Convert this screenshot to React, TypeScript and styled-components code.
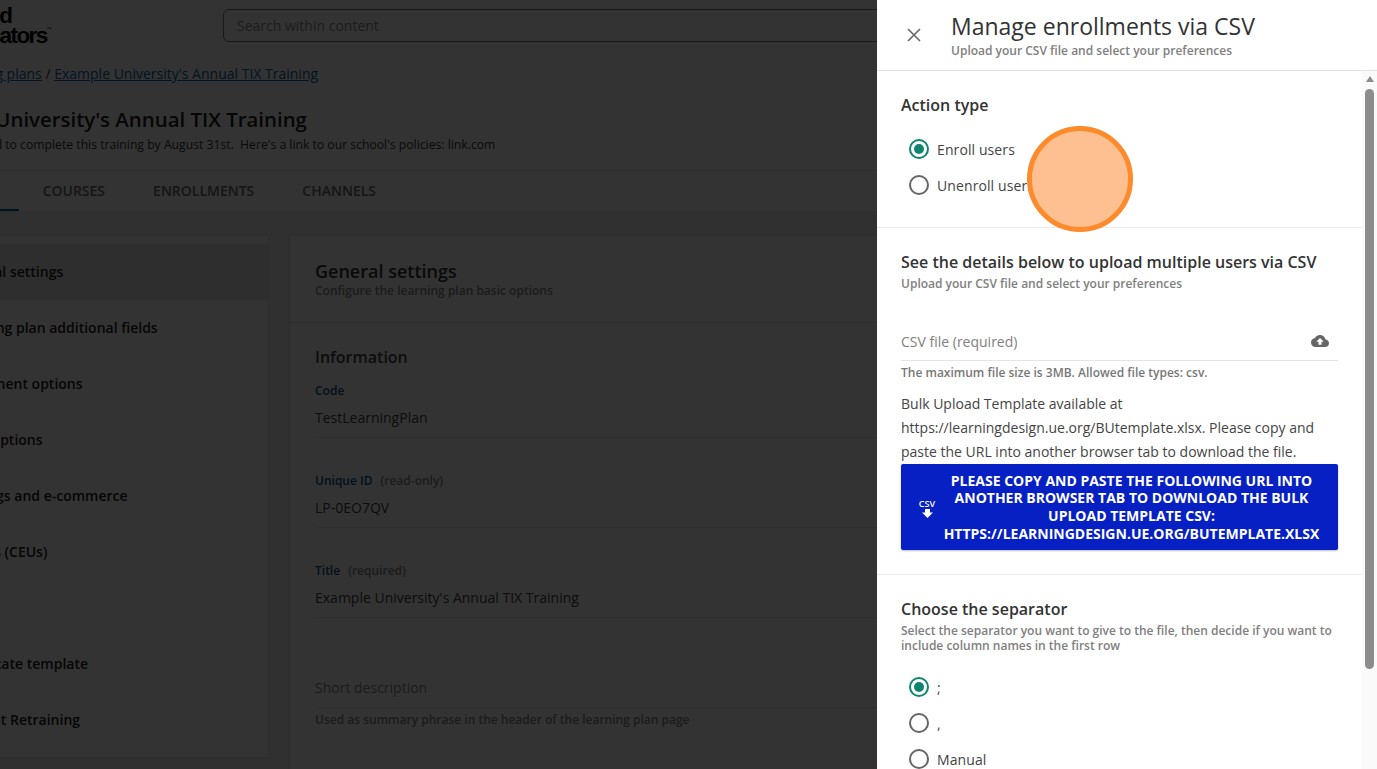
import styled, { createGlobalStyle } from 'styled-components';

const GlobalStyle = createGlobalStyle`
  html, body {
    margin: 0;
    height: 100%;
    overflow: hidden;
    background: #fff;
    font-family: "Open Sans", "Liberation Sans", sans-serif;
    color: #333;
  }
  * { box-sizing: border-box; }
`;

/* page behind the overlay, scrolled sideways so that its left edge is cut */
const Page = styled.div`
  width: 1497px;
  height: 769px;
  margin-left: -120px;
  overflow: hidden;
  display: flex;
  flex-direction: column;
  background: #fff;
  & > * { flex: none; }
`;

const TopBar = styled.header`
  height: 52px;
  display: flex;
  align-items: flex-start;
  padding-left: 71px;
`;

const Logo = styled.div`
  width: 272px;
  padding-top: 6px;
  font-family: "Liberation Sans", sans-serif;
  font-weight: 700;
  font-size: 22.5px;
  line-height: 20px;
  letter-spacing: -1.6px;
  color: #000;
  sup {
    font-size: 5px;
    line-height: 0;
    vertical-align: 12px;
    letter-spacing: 0;
  }
`;

const Search = styled.div`
  flex: 1;
  height: 33px;
  margin-top: 9px;
  padding: 0 13px;
  display: flex;
  align-items: center;
  border: 1px solid #7d7d7d;
  border-radius: 6px;
  font-size: 14px;
  color: #8e8e8e;
`;

const Crumbs = styled.div`
  padding: 13px 0 0 66px;
  height: 54px;
  font-size: 14px;
  line-height: 18px;
  a {
    color: #0465ac;
    text-decoration: underline;
  }
`;

const PageTitle = styled.h1`
  margin: 0;
  padding-left: 26px;
  font-size: 20.4px;
  font-weight: 600;
  line-height: 27px;
  height: 31px;
  color: #222;
`;

const PageDesc = styled.p`
  margin: 0;
  padding-left: 58px;
  height: 33px;
  font-size: 12.2px;
  line-height: 16px;
`;

const Tabs = styled.nav`
  display: flex;
  height: 42px;
  padding-left: 9px;
  border-top: 1px solid #e4e4e4;
  border-bottom: 1px solid #e4e4e4;
`;

const Tab = styled.div<{ $active?: boolean }>`
  padding: 0 24px;
  height: 40px;
  display: flex;
  align-items: center;
  font-size: 14px;
  font-weight: 600;
  color: ${(p) => (p.$active ? '#0465ac' : '#6a6a6a')};
  border-bottom: 2px solid ${(p) => (p.$active ? '#0465ac' : 'transparent')};
`;

const Body = styled.div`
  flex: 1 !important;
  display: flex;
  align-items: flex-start;
  gap: 22px;
  padding: 24px 0 0 46px;
  background: #f0f0f0;
`;

const SideMenu = styled.aside`
  width: 342px;
  padding-top: 8px;
  height: 521px;
  flex: none;
  background: #fff;
  box-shadow: 0 0 2px rgba(0, 0, 0, 0.2);
`;

const SideItem = styled.div<{ $active?: boolean }>`
  height: 56px;
  padding: 0 0 2px 27px;
  display: flex;
  align-items: center;
  font-size: 14px;
  font-weight: 600;
  color: #222;
  background: ${(p) => (p.$active ? '#e6e6e6' : 'transparent')};
`;

const Card = styled.main`
  flex: 1;
  height: 540px;
  background: #fff;
  box-shadow: 0 0 2px rgba(0, 0, 0, 0.2);
`;

const CardHead = styled.div`
  height: 87px;
  padding: 24px 25px 0;
  border-bottom: 1px solid #e4e4e4;
  h2 {
    margin: 0;
    font-size: 18px;
    font-weight: 600;
    line-height: 23px;
  }
  p {
    margin: 0;
    font-size: 12px;
    font-weight: 600;
    line-height: 16px;
    color: #8a8a8a;
  }
`;

const CardBody = styled.div`
  padding: 22px 25px 0;
  h3 {
    margin: 0 0 14px;
    font-size: 16px;
    font-weight: 600;
    line-height: 24px;
    color: #444;
  }
`;

const Field = styled.div`
  height: 90px;
  label {
    display: block;
    height: 16px;
    font-size: 12px;
    font-weight: 600;
    line-height: 16px;
    color: #0b4f8a;
    span {
      margin-left: 8px;
      color: #8a8a8a;
    }
  }
`;

const FieldValue = styled.div<{ $muted?: boolean }>`
  height: 39px;
  padding-top: 9px;
  font-size: 14px;
  line-height: 20px;
  border-bottom: 1px solid #e4e4e4;
  color: ${(p) => (p.$muted ? '#8a8a8a' : '#444')};
`;

const FieldHelp = styled.div`
  padding-top: 4px;
  font-size: 12px;
  font-weight: 600;
  line-height: 16px;
  color: #8a8a8a;
`;

const Overlay = styled.div`
  position: fixed;
  inset: 0;
  background: rgba(0, 0, 0, 0.8);
`;

const Drawer = styled.aside`
  position: fixed;
  top: 0;
  right: 0;
  bottom: 0;
  width: 500px;
  display: flex;
  flex-direction: column;
  background: #fff;
`;

const DrawerHead = styled.header`
  height: 71px;
  flex: none;
  display: flex;
  padding-left: 30px;
  border-bottom: 1px solid #e3e3e3;
`;

const CloseButton = styled.button`
  width: 14px;
  height: 14px;
  margin-top: 28px;
  padding: 0;
  border: 0;
  background: none;
  color: #666;
  svg { display: block; }
`;

const HeadText = styled.div`
  margin-left: 30px;
  padding-top: 10px;
  h1 {
    margin: 0;
    font-size: 23px;
    font-weight: 400;
    line-height: 33px;
    color: #333;
  }
  p {
    margin: 0;
    font-size: 12px;
    font-weight: 600;
    line-height: 15px;
    color: #808080;
  }
`;

const DrawerMain = styled.div`
  flex: 1;
  min-height: 0;
  display: flex;
`;

const Scroller = styled.div`
  flex: 1;
  min-width: 0;
  overflow: hidden;
`;

const Section = styled.section<{ $height: number }>`
  height: ${(p) => p.$height}px;
  padding: 23px 24px 0;
  border-bottom: 1px solid #e8e8e8;
`;

const SectionTitle = styled.h2`
  margin: 0 0 3px;
  font-size: 16px;
  font-weight: 600;
  line-height: 22px;
  color: #333;
`;

const SectionSub = styled.p`
  margin: 0;
  font-size: 12px;
  font-weight: 600;
  line-height: 15px;
  color: #808080;
`;

const RadioList = styled.div<{ $top: number }>`
  margin-top: ${(p) => p.$top}px;
  display: flex;
  flex-direction: column;
  gap: 16px;
`;

const RadioRow = styled.div`
  display: flex;
  align-items: center;
  height: 20px;
  padding-left: 8px;
  gap: 8px;
  font-size: 14px;
  letter-spacing: 0.1px;
  color: #444;
`;

const RadioDot = styled.span<{ $on?: boolean }>`
  width: 20px;
  height: 20px;
  flex: none;
  border-radius: 50%;
  border: 2px solid ${(p) => (p.$on ? '#0e8570' : '#666')};
  display: flex;
  align-items: center;
  justify-content: center;
  &::after {
    content: '';
    width: 10px;
    height: 10px;
    border-radius: 50%;
    background: ${(p) => (p.$on ? '#0e8570' : 'transparent')};
  }
`;

const FileRow = styled.div`
  margin-top: 31px;
  height: 39px;
  width: 437px;
  display: flex;
  align-items: center;
  justify-content: space-between;
  padding-right: 9px;
  border-bottom: 1px solid #e4e4e4;
  font-size: 14px;
  color: #808080;
  svg { display: block; color: #666; }
`;

const FileHelp = styled.div`
  margin-top: 4px;
  font-size: 12px;
  font-weight: 600;
  line-height: 15px;
  color: #777;
`;

const Paragraph = styled.p`
  margin: 12px 0 0;
  width: 437px;
  font-size: 14px;
  line-height: 24px;
  color: #444;
`;

const DownloadBtn = styled.button`
  width: 437px;
  height: 86px;
  padding: 0 16px;
  display: flex;
  align-items: center;
  border: 0;
  border-radius: 2px;
  background: #0620c4;
  color: #fff;
  font-family: inherit;
  box-shadow: 0 1px 2px rgba(0, 0, 0, 0.25);
`;

const CsvIcon = styled.span`
  width: 20px;
  margin-right: 4px;
  padding-top: 2px;
  flex: none;
  display: flex;
  flex-direction: column;
  align-items: center;
  gap: 1px;
  font-size: 9px;
  font-weight: 600;
  line-height: 9px;
  svg { display: block; }
`;

const BtnLabel = styled.span`
  flex: 1;
  text-align: center;
  font-size: 14px;
  font-weight: 700;
  line-height: 17.6px;
  text-transform: uppercase;
`;

const ScrollTrack = styled.div`
  width: 15px;
  flex: none;
  background: #fafafa;
  display: flex;
  flex-direction: column;
  align-items: center;
`;

const ScrollArrow = styled.span`
  margin-top: 5px;
  width: 0;
  height: 0;
  border-left: 4px solid transparent;
  border-right: 4px solid transparent;
  border-bottom: 6px solid #8c8c8c;
`;

const ScrollThumb = styled.span`
  margin-top: 7px;
  width: 9px;
  height: 580px;
  border-radius: 5px;
  background: #8c8c8c;
`;

const ClickMark = styled.div`
  position: absolute;
  top: 126px;
  left: 150px;
  width: 106px;
  height: 106px;
  border-radius: 50%;
  border: 5px solid #fd8a2b;
  background: #fec091;
`;

const sideItems = [
  'General settings',
  'Learning plan additional fields',
  'Enrollment options',
  'Redemptions',
  'Catalogs and e-commerce',
  'Credits (CEUs)',
  'Tags',
  'Certificate template',
  'Student Retraining',
];

export default function App() {
  return (
    <>
      <GlobalStyle />
      <Page>
        <TopBar>
          <Logo>
            United
            <br />
            Educators<sup>™</sup>
          </Logo>
          <Search>Search within content</Search>
        </TopBar>
        <Crumbs>
          <a>Learning plans</a> / <a>Example University's Annual TIX Training</a>
        </Crumbs>
        <PageTitle>Example University's Annual TIX Training</PageTitle>
        <PageDesc>Users need to complete this training by August 31st.&nbsp; Here's a link to our school's policies: link.com</PageDesc>
        <Tabs>
          <Tab $active>PROPERTIES</Tab>
          <Tab>COURSES</Tab>
          <Tab>ENROLLMENTS</Tab>
          <Tab>CHANNELS</Tab>
        </Tabs>
        <Body>
          <SideMenu>
            {sideItems.map((item, i) => (
              <SideItem key={item} $active={i === 0}>
                {item}
              </SideItem>
            ))}
          </SideMenu>
          <Card>
            <CardHead>
              <h2>General settings</h2>
              <p>Configure the learning plan basic options</p>
            </CardHead>
            <CardBody>
              <h3>Information</h3>
              <Field>
                <label>Code</label>
                <FieldValue>TestLearningPlan</FieldValue>
              </Field>
              <Field>
                <label>
                  Unique ID<span>(read-only)</span>
                </label>
                <FieldValue>LP-0EO7QV</FieldValue>
              </Field>
              <Field>
                <label>
                  Title<span>(required)</span>
                </label>
                <FieldValue>Example University's Annual TIX Training</FieldValue>
              </Field>
              <Field>
                <label />
                <FieldValue $muted>Short description</FieldValue>
                <FieldHelp>Used as summary phrase in the header of the learning plan page</FieldHelp>
              </Field>
            </CardBody>
          </Card>
        </Body>
      </Page>
      <Overlay />
      <Drawer>
        <DrawerHead>
          <CloseButton aria-label="Close">
            <svg width="14" height="14" viewBox="0 0 14 14" fill="none" stroke="currentColor" strokeWidth="1.6">
              <path d="M1 1l12 12M13 1L1 13" />
            </svg>
          </CloseButton>
          <HeadText>
            <h1>Manage enrollments via CSV</h1>
            <p>Upload your CSV file and select your preferences</p>
          </HeadText>
        </DrawerHead>
        <DrawerMain>
          <Scroller>
            <Section $height={157}>
              <SectionTitle>Action type</SectionTitle>
              <RadioList $top={23}>
                <RadioRow>
                  <RadioDot $on />
                  Enroll users
                </RadioRow>
                <RadioRow>
                  <RadioDot />
                  Unenroll users
                </RadioRow>
              </RadioList>
            </Section>
            <Section $height={347}>
              <SectionTitle>See the details below to upload multiple users via CSV</SectionTitle>
              <SectionSub>Upload your CSV file and select your preferences</SectionSub>
              <FileRow>
                CSV file (required)
                <svg width="18" height="18" viewBox="0 0 24 24" fill="currentColor">
                  <path d="M19.35 10.04C18.67 6.59 15.64 4 12 4 9.11 4 6.6 5.64 5.35 8.04 2.34 8.36 0 10.91 0 14c0 3.31 2.69 6 6 6h13c2.76 0 5-2.24 5-5 0-2.64-2.05-4.78-4.65-4.96zM14 13v4h-4v-4H7l5-5 5 5h-3z" />
                </svg>
              </FileRow>
              <FileHelp>The maximum file size is 3MB. Allowed file types: csv.</FileHelp>
              <Paragraph>
                Bulk Upload Template available at https://learningdesign.ue.org/BUtemplate.xlsx. Please copy and paste the URL into another browser tab to download the file.
              </Paragraph>
              <DownloadBtn>
                <CsvIcon>
                  CSV
                  <svg width="11" height="9" viewBox="0 0 11 9" fill="currentColor">
                    <path d="M3 0h5v3.5h3L5.5 9 0 3.5h3z" />
                  </svg>
                </CsvIcon>
                <BtnLabel>Please copy and paste the following URL into another browser tab to download the bulk upload template CSV: https://learningdesign.ue.org/BUtemplate.xlsx</BtnLabel>
              </DownloadBtn>
            </Section>
            <Section $height={260}>
              <SectionTitle>Choose the separator</SectionTitle>
              <SectionSub>Select the separator you want to give to the file, then decide if you want to include column names in the first row</SectionSub>
              <RadioList $top={24}>
                <RadioRow>
                  <RadioDot $on />;
                </RadioRow>
                <RadioRow>
                  <RadioDot />,
                </RadioRow>
                <RadioRow>
                  <RadioDot />
                  Manual
                </RadioRow>
              </RadioList>
            </Section>
          </Scroller>
          <ScrollTrack>
            <ScrollArrow />
            <ScrollThumb />
          </ScrollTrack>
        </DrawerMain>
        <ClickMark />
      </Drawer>
    </>
  );
}
